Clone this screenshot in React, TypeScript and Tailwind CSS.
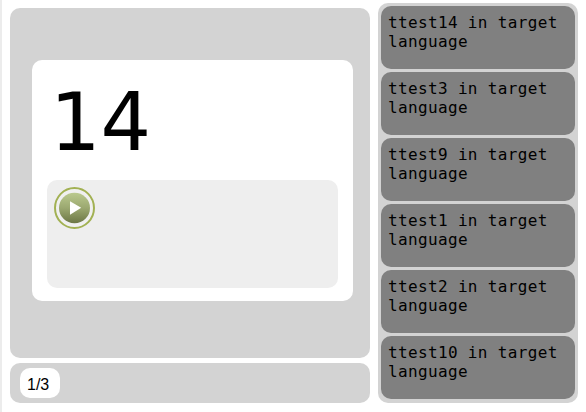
const answers = ["ttest14", "ttest3", "ttest9", "ttest1", "ttest2", "ttest10"];

function PlayButton() {
  return (
    <button aria-label="Play" className="block h-[42px] w-[41px]">
      <svg width="41" height="42" viewBox="0 0 41 42" className="block">
        <defs>
          <linearGradient id="play-fill" x1="0" y1="0" x2="0" y2="1">
            <stop offset="0" stopColor="#bac98e" />
            <stop offset="0.5" stopColor="#9ba870" />
            <stop offset="1" stopColor="#6c7745" />
          </linearGradient>
        </defs>
        <ellipse cx="20.5" cy="21" rx="19.5" ry="20" fill="#f0f0f0" stroke="#a2b153" strokeWidth="2" />
        <ellipse cx="20.5" cy="21" rx="15.5" ry="15.2" fill="url(#play-fill)" />
        <path d="M16 14.2 27.2 20.7 16 27.8Z" fill="#fff" />
      </svg>
    </button>
  );
}

export default function App() {
  return (
    <div className="flex h-[412px] w-[586px] overflow-hidden border-l-2 border-[#ececec] bg-white text-black">
      <main className="ml-2 flex w-[360px] shrink-0 flex-col gap-[5px] pt-2">
        <section className="h-[350px] rounded-[10px] bg-[#d3d3d3] px-[22px] pt-[52px]">
          <div className="h-[241px] w-[321px] rounded-[10px] bg-white px-[15px] pt-[15px]">
            <div className="h-[105px] pl-[3px] pt-[1px] font-['DejaVu_Sans',sans-serif] text-[79.5px] leading-[93px]">14</div>
            <div className="h-[108px] w-[291px] rounded-[10px] bg-[#eeeeee] pl-[7px] pt-[7px]">
              <PlayButton />
            </div>
          </div>
        </section>
        <footer className="h-10 rounded-[10px] bg-[#d3d3d3] pl-[10px] pt-[5px]">
          <div className="h-[30px] w-10 rounded-[10px] bg-white pl-[7px] pt-px font-['Liberation_Sans',Arial,sans-serif] text-[16px] leading-[32px]">1/3</div>
        </footer>
      </main>
      <aside className="ml-2 mt-[3px] flex h-[400px] w-[200px] shrink-0 flex-col gap-[3px] rounded-[10px] bg-[#d3d3d3] p-[3px]">
        {answers.map((name) => (
          <div key={name} className="h-[63px] w-[194px] shrink-0 rounded-[10px] bg-[#808080] pl-[7px] pt-[7px] font-['Droid_Sans_Mono','DejaVu_Sans_Mono',monospace] text-[16px] tracking-[0.35px] leading-[19px]">
            {name} in target language
          </div>
        ))}
      </aside>
    </div>
  );
}
